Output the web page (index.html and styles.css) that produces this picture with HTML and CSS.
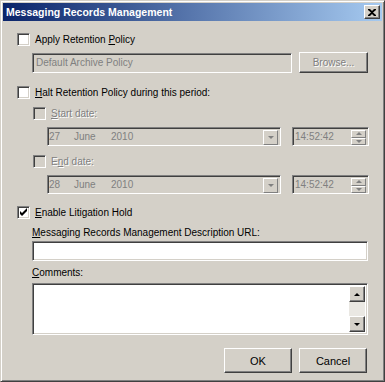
FILE: index.html
```html
<!DOCTYPE html>
<html lang="en">

<head>
    <meta charset="UTF-8">
    <title>Messaging Records Management</title>
    <link rel="stylesheet" href="styles.css">
</head>

<body>
    <div class="window">
        <div class="titlebar">
            <span class="title">Messaging Records Management</span>
            <span class="close-btn">
                <svg width="8" height="7" viewBox="0 0 8 7"><path d="M0 0h2l2 2 2-2h2v1L5 3.5 8 6v1H6L4 5 2 7H0V6l3-2.5L0 1z" fill="#000"/></svg>
            </span>
        </div>

        <div class="content">
            <div class="check-row r-apply">
                <span class="check"></span>
                <span>Apply Retention <u>P</u>olicy</span>
            </div>

            <div class="field-row r-policy">
                <div class="field disabled policy-box">Default Archive Policy</div>
                <div class="btn browse disabled-text">Browse...</div>
            </div>

            <div class="check-row r-halt">
                <span class="check"></span>
                <span><u>H</u>alt Retention Policy during this period:</span>
            </div>

            <div class="check-row sub r-start">
                <span class="check off"></span>
                <span class="disabled-text"><u>S</u>tart date:</span>
            </div>

            <div class="date-row r-date1">
                <div class="field disabled combo">
                    <span class="d">27</span><span class="m">June</span><span class="y">2010</span>
                    <span class="drop"><i class="arrow-down"></i></span>
                </div>
                <div class="field disabled time">
                    14:52:42
                    <span class="spin"><span><i class="arrow-up"></i></span><span><i class="arrow-down"></i></span></span>
                </div>
            </div>

            <div class="check-row sub r-end">
                <span class="check off"></span>
                <span class="disabled-text">E<u>n</u>d date:</span>
            </div>

            <div class="date-row r-date2">
                <div class="field disabled combo">
                    <span class="d">28</span><span class="m">June</span><span class="y">2010</span>
                    <span class="drop"><i class="arrow-down"></i></span>
                </div>
                <div class="field disabled time">
                    14:52:42
                    <span class="spin"><span><i class="arrow-up"></i></span><span><i class="arrow-down"></i></span></span>
                </div>
            </div>

            <div class="check-row r-hold">
                <span class="check"><svg width="9" height="9" viewBox="0 0 9 9"><path d="M1 3v3l2 2 5-5V0L3 5z" fill="#000"/></svg></span>
                <span><u>E</u>nable Litigation Hold</span>
            </div>

            <div class="label r-urllabel"><u>M</u>essaging Records Management Description URL:</div>
            <div class="field url"></div>

            <div class="label r-comlabel"><u>C</u>omments:</div>
            <div class="field comments">
                <div class="scrollbar">
                    <span class="btn sb"><i class="arrow-up dark"></i></span>
                    <span class="track"></span>
                    <span class="btn sb"><i class="arrow-down dark"></i></span>
                </div>
            </div>

            <div class="buttons">
                <div class="btn push">OK</div>
                <div class="btn push">Cancel</div>
            </div>
        </div>
    </div>
</body>

</html>
```

FILE: styles.css
```css
* {
    margin: 0;
    box-sizing: border-box;
}

body {
    background-color: #d4d0c8;
    font-family: 'Liberation Sans', Arial, sans-serif;
    font-size: 10px;
    color: #000;
}

u {
    text-decoration: underline;
    text-underline-offset: 1px;
}

.window {
    width: 385px;
    height: 382px;
    background-color: #d4d0c8;
    border: 1px solid;
    border-color: #d4d0c8 #404040 #404040 #d4d0c8;
    box-shadow: inset 1px 1px #fff, inset -1px -1px #808080;
    padding: 2px;
}

.titlebar {
    height: 18px;
    background: linear-gradient(to right, #0a246a, #a6caf0);
    display: flex;
    align-items: center;
    justify-content: space-between;
    padding: 0 2px 0 3px;
}

.title {
    color: #fff;
    font-weight: bold;
    font-size: 10.5px;
}

.close-btn {
    width: 16px;
    height: 14px;
    background-color: #d4d0c8;
    border: 1px solid;
    border-color: #fff #404040 #404040 #fff;
    box-shadow: inset -1px -1px #808080;
    display: flex;
    align-items: center;
    justify-content: center;
}

.content {
    position: relative;
    padding-left: 14px;
}

/* checkbox rows */
.check-row {
    display: flex;
    align-items: center;
    gap: 5px;
    height: 13px;
}

.check-row.sub {
    padding-left: 16px;
}

.check {
    width: 13px;
    height: 13px;
    background-color: #fff;
    border: 1px solid;
    border-color: #808080 #fff #fff #808080;
    box-shadow: inset 1px 1px #404040, inset -1px -1px #d4d0c8;
    display: flex;
    align-items: center;
    justify-content: center;
    flex-shrink: 0;
}

.check.off {
    background-color: #d4d0c8;
}

.disabled-text {
    color: #808080;
    text-shadow: 1px 1px #fff;
}

.r-apply { margin-top: 12px; }
.r-halt { margin-top: 13px; }
.r-start { margin-top: 8px; }
.r-end { margin-top: 9px; }
.r-hold { margin-top: 12px; }

/* sunken fields */
.field {
    background-color: #fff;
    border: 1px solid;
    border-color: #808080 #fff #fff #808080;
    box-shadow: inset 1px 1px #404040, inset -1px -1px #d4d0c8;
    padding: 0 3px;
    display: flex;
    align-items: center;
    position: relative;
}

.field.disabled {
    background-color: #d4d0c8;
    color: #808080;
}

.field-row {
    display: flex;
    align-items: center;
    gap: 7px;
    padding-left: 15px;
    margin-top: 6px;
    height: 21px;
}

.policy-box {
    width: 260px;
    height: 20px;
}

.btn {
    background-color: #d4d0c8;
    border: 1px solid;
    border-color: #fff #404040 #404040 #fff;
    box-shadow: inset -1px -1px #808080, inset 1px 1px #d4d0c8;
    display: flex;
    align-items: center;
    justify-content: center;
}

.browse {
    width: 69px;
    height: 21px;
}

/* date rows */
.date-row {
    display: flex;
    gap: 11px;
    padding-left: 30px;
    margin-top: 7px;
    height: 19px;
}

.combo {
    width: 234px;
    padding-left: 1px;
}

.combo .d { width: 25px; }
.combo .m { width: 37px; }

.drop {
    position: absolute;
    right: 2px;
    top: 2px;
    width: 15px;
    height: 15px;
    background-color: #d4d0c8;
    border: 1px solid;
    border-color: #fff #808080 #808080 #fff;
    display: flex;
    align-items: center;
    justify-content: center;
}

.time {
    width: 77px;
    padding-left: 2px;
}

.spin {
    position: absolute;
    right: 2px;
    top: 2px;
    width: 15px;
    height: 15px;
    display: flex;
    flex-direction: column;
}

.spin span {
    flex: 1;
    background-color: #d4d0c8;
    border: 1px solid;
    border-color: #fff #808080 #808080 #fff;
    display: flex;
    align-items: center;
    justify-content: center;
}

.arrow-down,
.arrow-up {
    width: 0;
    height: 0;
    border-left: 3px solid transparent;
    border-right: 3px solid transparent;
}

.arrow-down {
    border-top: 3px solid #808080;
}

.arrow-up {
    border-bottom: 3px solid #808080;
}

.arrow-down.dark { border-top-color: #000; }
.arrow-up.dark { border-bottom-color: #000; }

/* url + comments */
.label {
    margin-left: 15px;
    line-height: 13px;
}

.r-urllabel { margin-top: 7px; }

.url {
    margin: 2px 0 0 15px;
    width: 336px;
    height: 20px;
}

.r-comlabel { margin-top: 5px; }

.comments {
    margin: 4px 0 0 15px;
    width: 336px;
    height: 52px;
    justify-content: flex-end;
    align-items: stretch;
    padding: 2px;
}

.scrollbar {
    width: 16px;
    display: flex;
    flex-direction: column;
}

.sb {
    height: 16px;
    flex-shrink: 0;
}

.track {
    flex: 1;
    background-color: #eae8e3;
}

.buttons {
    display: flex;
    justify-content: flex-end;
    gap: 7px;
    margin-top: 13px;
    padding-right: 15px;
}

.push {
    width: 68px;
    height: 25px;
    font-size: 11px;
}
```
